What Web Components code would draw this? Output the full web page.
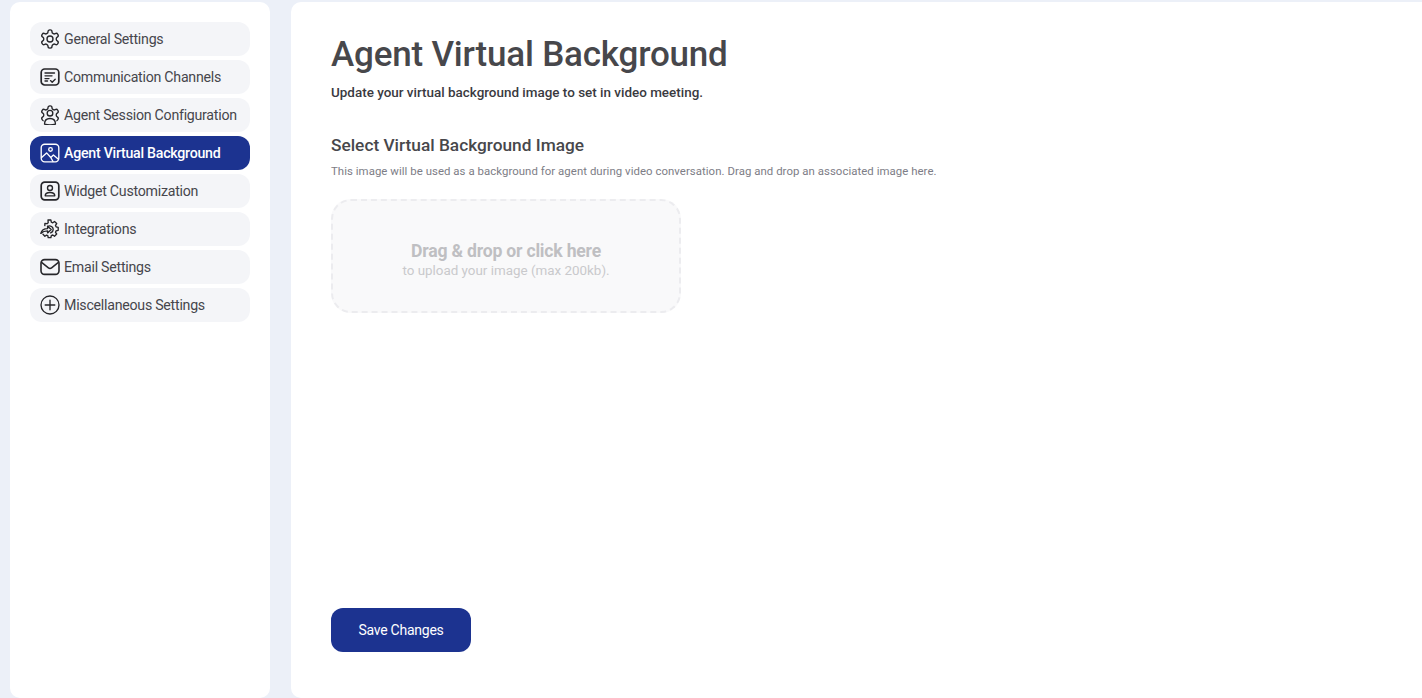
<!DOCTYPE html>
<html><head><meta charset="utf-8">
<style>
html,body{margin:0;padding:0;height:100%;overflow:hidden}
body{background:#ecf0f8;font-family:Roboto,"Liberation Sans",sans-serif;color:#3f3f46}
</style></head>
<body>
<template id="t-shell"><style>
:host{display:grid;grid-template-columns:260px 1fr;column-gap:21px;height:696px;padding:2px 0 0 10px;box-sizing:content-box}
</style><slot name="side"></slot><slot name="main"></slot></template>

<template id="t-side"><style>
:host{display:flex;flex-direction:column;gap:4px;background:#fff;border-radius:10px;padding:20px;box-sizing:border-box;height:696px}
</style><slot></slot></template>

<template id="t-item"><style>
:host{display:flex;align-items:center;gap:4px;height:34px;box-sizing:border-box;padding:0 10px;border-radius:12px;background:#f4f5f8;color:#46464c;font-size:14.2px;letter-spacing:-.26px;white-space:nowrap}
:host([active]){background:#1c3390;color:#fff;font-weight:500}
.i{width:20px;height:20px;flex:none;display:flex}
::slotted(svg){width:20px;height:20px;fill:none;stroke:currentColor;stroke-width:1.35;stroke-linecap:round;stroke-linejoin:round}
:host(:not([active])) ::slotted(svg){color:#26262a}
</style><span class="i"><slot name="icon"></slot></span><span><slot></slot></span></template>

<template id="t-main"><style>
:host{display:flex;flex-direction:column;background:#fff;border-radius:10px 0 0 10px;padding:32px 40px 46px;box-sizing:border-box;height:696px;color:#3f3f46}
h1{margin:0;font:500 35px/42px Roboto,sans-serif;letter-spacing:-.2px;color:#47474b}
.sub{margin:7px 0 0;font:500 13.45px/20px Roboto,sans-serif;color:#3a3a3f}
h2{margin:30px 0 0;font:500 17.3px/24px Roboto,sans-serif;color:#47474b}
.hint{margin:6px 0 0;font:400 11.4px/16px Roboto,sans-serif;color:#7d7d86;letter-spacing:.05px}
.sp{flex:1}
</style>
<h1>Agent Virtual Background</h1>
<p class="sub">Update your virtual background image to set in video meeting.</p>
<h2>Select Virtual Background Image</h2>
<p class="hint">This image will be used as a background for agent during video conversation. Drag and drop an associated image here.</p>
<slot name="drop"></slot><span class="sp"></span><slot name="action"></slot></template>

<template id="t-drop"><style>
:host{display:flex;flex-direction:column;align-items:center;justify-content:center;width:350px;height:114px;margin-top:20px;box-sizing:border-box;border:2px dashed #ececef;border-radius:20px;background:#f9f9fa;padding-top:10px}
b{font:700 17.6px/19px Roboto,sans-serif;color:#bfbfc2;letter-spacing:-.2px}
span{font:400 13.4px/19px Roboto,sans-serif;color:#c9c9cc}
</style><b><slot name="title"></slot></b><span><slot name="note"></slot></span></template>

<template id="t-btn"><style>
:host{display:flex;align-items:center;justify-content:center;width:140px;height:44px;border-radius:12px;background:#1c3390;color:#fff;font:400 14px Roboto,sans-serif;letter-spacing:-.25px;cursor:pointer}
</style><slot></slot></template>

<app-shell>
<side-nav slot="side">
<nav-item><svg slot="icon" viewBox="1 1 22 22" style="stroke-width:1.5"><path d="M12.22 2h-.44a2 2 0 0 0-2 2v.18a2 2 0 0 1-1 1.73l-.43.25a2 2 0 0 1-2 0l-.15-.08a2 2 0 0 0-2.73.73l-.22.38a2 2 0 0 0 .73 2.73l.15.1a2 2 0 0 1 1 1.72v.51a2 2 0 0 1-1 1.74l-.15.09a2 2 0 0 0-.73 2.73l.22.38a2 2 0 0 0 2.73.73l.15-.08a2 2 0 0 1 2 0l.43.25a2 2 0 0 1 1 1.73V20a2 2 0 0 0 2 2h.44a2 2 0 0 0 2-2v-.18a2 2 0 0 1 1-1.73l.43-.25a2 2 0 0 1 2 0l.15.08a2 2 0 0 0 2.73-.73l.22-.39a2 2 0 0 0-.73-2.73l-.15-.08a2 2 0 0 1-1-1.74v-.5a2 2 0 0 1 1-1.74l.15-.09a2 2 0 0 0 .73-2.73l-.22-.38a2 2 0 0 0-2.73-.73l-.15.08a2 2 0 0 1-2 0l-.43-.25a2 2 0 0 1-1-1.73V4a2 2 0 0 0-2-2z"/><circle cx="12" cy="12" r="3.3"/></svg>General Settings</nav-item>
<nav-item><svg slot="icon" viewBox="0 0 20 20"><rect x="1.2" y="2" width="17.6" height="16" rx="3.5" style="stroke-width:1.7"/><path d="M5 6h9.5M5 8.8h7M5 11.6h4M5 14h2.5M10.5 13.6l1.7 1.6 3-3"/></svg>Communication Channels</nav-item>
<nav-item><svg slot="icon" viewBox="1 1 22 22" style="stroke-width:1.5"><path d="M12.22 2h-.44a2 2 0 0 0-2 2v.18a2 2 0 0 1-1 1.73l-.43.25a2 2 0 0 1-2 0l-.15-.08a2 2 0 0 0-2.73.73l-.22.38a2 2 0 0 0 .73 2.73l.15.1a2 2 0 0 1 1 1.72v.51a2 2 0 0 1-1 1.74l-.15.09a2 2 0 0 0-.73 2.73l.22.38a2 2 0 0 0 2.73.73l.15-.08a2 2 0 0 1 2 0l.43.25a2 2 0 0 1 1 1.73V20a2 2 0 0 0 2 2h.44a2 2 0 0 0 2-2v-.18a2 2 0 0 1 1-1.73l.43-.25a2 2 0 0 1 2 0l.15.08a2 2 0 0 0 2.73-.73l.22-.39a2 2 0 0 0-.73-2.73l-.15-.08a2 2 0 0 1-1-1.74v-.5a2 2 0 0 1 1-1.74l.15-.09a2 2 0 0 0 .73-2.73l-.22-.38a2 2 0 0 0-2.73-.73l-.15.08a2 2 0 0 1-2 0l-.43-.25a2 2 0 0 1-1-1.73V4a2 2 0 0 0-2-2z"/><path fill="#f4f5f8" stroke="none" d="M5 15h14v8H5z"/><circle cx="12" cy="10" r="3.1"/><path d="M6 22c0-3.8 2.4-6.2 6-6.2s6 2.4 6 6.2c-3.4 1-8.6 1-12 0z"/></svg>Agent Session Configuration</nav-item>
<nav-item active><svg slot="icon" viewBox="0 0 20 20"><rect x="1.2" y="1.2" width="17.6" height="17.6" rx="3.5"/><circle cx="10.5" cy="6.4" r="1.8"/><path d="M1.6 14.5l5-4.6 4.2 4.6 2.6-2.6 5 4.4M10.8 14.5l2.2 4"/></svg>Agent Virtual Background</nav-item>
<nav-item><svg slot="icon" viewBox="0 0 20 20"><rect x="1.2" y="1.2" width="17.6" height="17.6" rx="3.5" style="stroke-width:1.7"/><circle cx="10" cy="7" r="2.5"/><path d="M5.2 14.8c0-2.3 2-3.3 4.8-3.3s4.8 1 4.8 3.3z"/></svg>Widget Customization</nav-item>
<nav-item><svg slot="icon" viewBox="0 0 20 20"><path d="M4.8 6.6l.1-2.2 2.1.3 1.2-1L8 1h2.9l.4 2.2 1.5.6 1.7-1.3 2.2 2.1-1.2 1.8.6 1.4 2.1.5v3l-2.1.5-.6 1.5 1.2 1.7-2.2 2.2-1.7-1.2-1.5.6-.4 2H8.2l-.4-2-1.3-.5-1.6 1.1-1.9-2"/><path d="M7.6 7.6a3.5 3.5 0 1 1 3 6.2"/><path d="M.8 14.4c.8-3.2 3.3-4.8 6.8-4.8V7.2l3.6 3.3-3.6 3.4v-2.1c-2.7 0-5 .8-6.8 2.6z"/></svg>Integrations</nav-item>
<nav-item><svg slot="icon" viewBox="0 0 20 20"><rect x="1" y="2.6" width="18" height="14.8" rx="3.6" style="stroke-width:1.6"/><path d="M1.6 5.4l6.8 5.4c1 .8 2.2.8 3.2 0l6.8-5.4" style="stroke-width:1.5"/></svg>Email Settings</nav-item>
<nav-item><svg slot="icon" viewBox="0 0 20 20"><circle cx="10" cy="10" r="9"/><path d="M10 5.2v9.6M5.2 10h9.6"/></svg>Miscellaneous Settings</nav-item>
</side-nav>
<main-panel slot="main">
<drop-zone slot="drop"><span slot="title">Drag &amp; drop or click here</span><span slot="note">to upload your image (max 200kb).</span></drop-zone>
<save-button slot="action">Save Changes</save-button>
</main-panel>
</app-shell>
<script>
const reg=(n,t)=>customElements.define(n,class extends HTMLElement{constructor(){super();this.attachShadow({mode:'open'}).appendChild(document.getElementById(t).content.cloneNode(true))}});
reg('app-shell','t-shell');reg('side-nav','t-side');reg('nav-item','t-item');reg('main-panel','t-main');reg('drop-zone','t-drop');reg('save-button','t-btn');
</script>
</body></html>
